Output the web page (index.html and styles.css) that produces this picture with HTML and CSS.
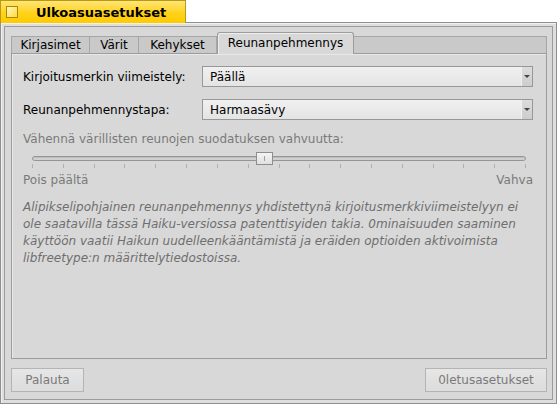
FILE: index.html
```html
<!DOCTYPE html>
<html>
<head>
<meta charset="utf-8">
<link rel="stylesheet" href="styles.css">
</head>
<body>
<div class="window">
  <div class="titletab">
    <span class="closebox"></span>
    <span class="title">Ulkoasuasetukset</span>
  </div>
  <div class="frame">
    <div class="inner">
      <div class="tabs">
        <div class="tab t1">Kirjasimet</div>
        <div class="tab t2">Värit</div>
        <div class="tab t3">Kehykset</div>
        <div class="tab active">Reunanpehmennys</div>
        <div class="tab fill"></div>
      </div>
      <div class="panel">
        <div class="row">
          <span class="label">Kirjoitusmerkin viimeistely:</span>
          <div class="popup"><span class="ptext">Päällä</span><span class="parrow"><span class="tri"></span></span></div>
        </div>
        <div class="row row2">
          <span class="label">Reunanpehmennystapa:</span>
          <div class="popup"><span class="ptext">Harmaasävy</span><span class="parrow"><span class="tri"></span></span></div>
        </div>
        <div class="slabel">Vähennä värillisten reunojen suodatuksen vahvuutta:</div>
        <div class="slider">
          <div class="track">
            <div class="thumb"><span class="grip"></span></div>
          </div>
          <div class="ticks">
            <span></span><span></span><span></span><span></span><span></span><span></span><span></span><span></span><span></span><span></span><span></span><span></span><span></span><span></span><span></span><span></span><span></span>
          </div>
        </div>
        <div class="limits"><span>Pois päältä</span><span>Vahva</span></div>
        <p class="note">Alipikselipohjainen reunanpehmennys yhdistettynä kirjoitusmerkkiviimeistelyyn ei<br>ole saatavilla tässä Haiku-versiossa patenttisyiden takia. 0minaisuuden saaminen<br>käyttöön vaatii Haikun uudelleenkääntämistä ja eräiden optioiden aktivoimista<br>libfreetype:n määrittelytiedostoissa.</p>
      </div>
      <div class="buttons">
        <button class="btn b1">Palauta</button>
        <button class="btn b2">0letusasetukset</button>
      </div>
    </div>
  </div>
</div>
</body>
</html>
```

FILE: styles.css
```css
html, body {
  margin: 0;
  padding: 0;
  background: #ffffff;
}
body {
  font-family: "DejaVu Sans", "Liberation Sans", sans-serif;
  font-size: 12px;
  color: #000;
  width: 557px;
  height: 404px;
  overflow: hidden;
}
.window {
  display: flex;
  flex-direction: column;
  width: 557px;
  height: 404px;
}
.titletab {
  box-sizing: border-box;
  width: 186px;
  height: 23px;
  margin-bottom: -1px;
  border: 1px solid #b89a10;
  border-bottom: none;
  background: linear-gradient(#ffe57a, #ffd21a 55%, #ffcb00);
  display: flex;
  align-items: center;
  position: relative;
  z-index: 1;
}
.closebox {
  box-sizing: border-box;
  width: 12px;
  height: 12px;
  margin-left: 5px;
  border: 1px solid #a88a00;
  background: linear-gradient(135deg, #fff6c0, #ffd940);
}
.title {
  margin-left: 18px;
  font-weight: bold;
  font-size: 13px;
}
.frame {
  flex: 1;
  box-sizing: border-box;
  border: 1px solid #8f8f8f;
  padding: 3px;
  background: #dedede;
  box-shadow: inset 1px 1px 0 #f0f0f0;
}
.inner {
  box-sizing: border-box;
  height: 100%;
  border: 1px solid #9c9c9c;
  background: #d8d8d8;
  padding: 5px 5px 7px 6px;
  display: flex;
  flex-direction: column;
}
.tabs {
  display: flex;
  align-items: flex-end;
  height: 21px;
}
.tab {
  box-sizing: border-box;
  height: 17px;
  background: #c9c9c9;
  border-top: 1px solid #a6a6a6;
  border-right: 1px solid #a6a6a6;
  padding: 1px 0 0;
  text-align: center;
  line-height: 14px;
  white-space: nowrap;
}
.t1 { width: 79px; border-left: 1px solid #a6a6a6; }
.t2 { width: 49px; }
.t3 { width: 78px; }
.tab.active {
  width: 137px;
  height: 22px;
  margin-bottom: -1px;
  background: #d8d8d8;
  border: 1px solid #9c9c9c;
  border-bottom: none;
  border-radius: 3px 3px 0 0;
  box-shadow: inset 1px 1px 0 #eeeeee;
  padding-top: 3px;
  position: relative;
  z-index: 1;
}
.tab.fill {
  flex: 1;
  border-right: 1px solid #a6a6a6;
}
.panel {
  box-sizing: border-box;
  height: 306px;
  border: 1px solid #9c9c9c;
  padding: 12px 13px 0 11px;
  box-shadow: inset 1px 1px 0 #e8e8e8;
}
.row {
  display: grid;
  grid-template-columns: 179px 1fr;
  align-items: center;
}
.row2 {
  margin-top: 12px;
}
.popup {
  box-sizing: border-box;
  height: 21px;
  border: 1px solid #989898;
  background: linear-gradient(#f0f0f0, #e4e4e4);
  display: flex;
  align-items: center;
}
.ptext {
  flex: 1;
  padding-left: 7px;
}
.parrow {
  box-sizing: border-box;
  width: 11px;
  height: 100%;
  border-left: 1px solid #f2f2f2;
  background: linear-gradient(#dcdcdc, #cdcdcd);
  display: flex;
  align-items: center;
  justify-content: center;
}
.tri {
  width: 0;
  height: 0;
  border-left: 3px solid transparent;
  border-right: 3px solid transparent;
  border-top: 3px solid #444;
}
.slabel {
  margin-top: 12px;
  color: #7a7a7a;
  line-height: 14px;
}
.slider {
  margin: 10px 7px 0 9px;
}
.track {
  position: relative;
  box-sizing: border-box;
  height: 5px;
  border: 1px solid #959595;
  border-radius: 3px;
  background: #d0d0d0;
  box-shadow: inset 0 1px 0 #bdbdbd;
}
.thumb {
  position: absolute;
  left: 223px;
  top: -5px;
  box-sizing: border-box;
  width: 17px;
  height: 13px;
  border: 1px solid #8e8e8e;
  background: linear-gradient(#f4f4f4, #e0e0e0);
  display: flex;
  justify-content: center;
  align-items: center;
}
.grip {
  width: 1px;
  height: 5px;
  background: #a0a0a0;
}
.ticks {
  display: flex;
  justify-content: space-between;
  margin-top: 3px;
}
.ticks span {
  width: 1px;
  height: 4px;
  background: #b0b0b0;
}
.limits {
  display: flex;
  justify-content: space-between;
  color: #7a7a7a;
  margin-top: 5px;
  line-height: 14px;
}
.note {
  margin: 12px 0 0;
  font-style: italic;
  color: #6f6f6f;
  line-height: 17px;
  white-space: nowrap;
}
.buttons {
  display: flex;
  justify-content: space-between;
  margin-top: 9px;
}
.btn {
  box-sizing: border-box;
  height: 24px;
  border: 1px solid #b4b4b4;
  background: linear-gradient(#e6e6e6, #dcdcdc);
  font-family: "DejaVu Sans", "Liberation Sans", sans-serif;
  font-size: 12px;
  color: #7a7a7a;
  padding: 0;
  margin: 0;
}
.b1 { width: 73px; }
.b2 { width: 122px; }
```
